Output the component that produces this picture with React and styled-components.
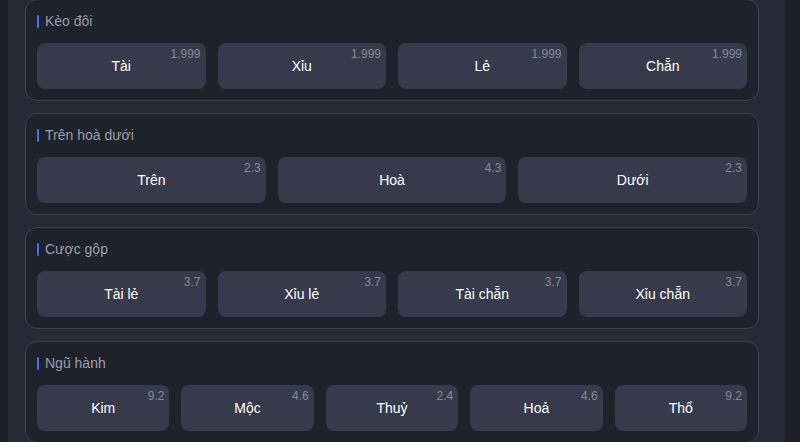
import React from "react";
import styled, { createGlobalStyle } from "styled-components";

const Global = createGlobalStyle`
  html, body { margin: 0; padding: 0; background: #1c1f26; height: 100%; overflow: hidden; }
  body { font-family: "Liberation Sans", Arial, sans-serif; }
`;

const Page = styled.div`
  display: flex;
  height: 442px;
  background: #1c1f26;
`;

const Panel = styled.div`
  margin-left: 8px;
  width: 777px;
  background: #262a35;
  padding: 0 26px 0 17px;
  box-sizing: border-box;
  overflow: hidden;
`;

const Stack = styled.div`
  display: flex;
  flex-direction: column;
  gap: 12px;
  margin-top: -1px;
`;

const Card = styled.section`
  background: #1e222a;
  border: 1px solid #3b404c;
  border-radius: 12px;
  padding: 11px;
  display: flex;
  flex-direction: column;
  gap: 12px;
`;

const Title = styled.div`
  display: flex;
  align-items: center;
  gap: 6px;
  height: 20px;
  font-size: 14px;
  color: #9a9eab;
  &::before {
    content: "";
    width: 2px;
    height: 13px;
    background: #4d6bf0;
    border-radius: 1px;
  }
`;

const Grid = styled.div`
  display: grid;
  grid-template-columns: repeat(${(p) => p.$cols}, 1fr);
  gap: 12px;
`;

const Bet = styled.div`
  position: relative;
  height: 46px;
  background: #363a4b;
  border-radius: 8px;
  display: flex;
  align-items: center;
  justify-content: center;
  color: #ffffff;
  font-size: 14px;
`;

const Odds = styled.span`
  position: absolute;
  top: 4px;
  right: 5px;
  font-size: 12px;
  color: #858a97;
`;

const groups = [
  { title: "Kèo đôi", items: [["Tài", "1.999"], ["Xỉu", "1.999"], ["Lẻ", "1.999"], ["Chẵn", "1.999"]] },
  { title: "Trên hoà dưới", items: [["Trên", "2.3"], ["Hoà", "4.3"], ["Dưới", "2.3"]] },
  { title: "Cược gộp", items: [["Tài lẻ", "3.7"], ["Xỉu lẻ", "3.7"], ["Tài chẵn", "3.7"], ["Xỉu chẵn", "3.7"]] },
  { title: "Ngũ hành", items: [["Kim", "9.2"], ["Mộc", "4.6"], ["Thuỷ", "2.4"], ["Hoả", "4.6"], ["Thổ", "9.2"]] },
];

export default function App() {
  return (
    <>
      <Global />
      <Page>
        <Panel>
          <Stack>
            {groups.map((g) => (
              <Card key={g.title}>
                <Title>{g.title}</Title>
                <Grid $cols={g.items.length}>
                  {g.items.map(([name, odd]) => (
                    <Bet key={name}>
                      {name}
                      <Odds>{odd}</Odds>
                    </Bet>
                  ))}
                </Grid>
              </Card>
            ))}
          </Stack>
        </Panel>
      </Page>
    </>
  );
}
